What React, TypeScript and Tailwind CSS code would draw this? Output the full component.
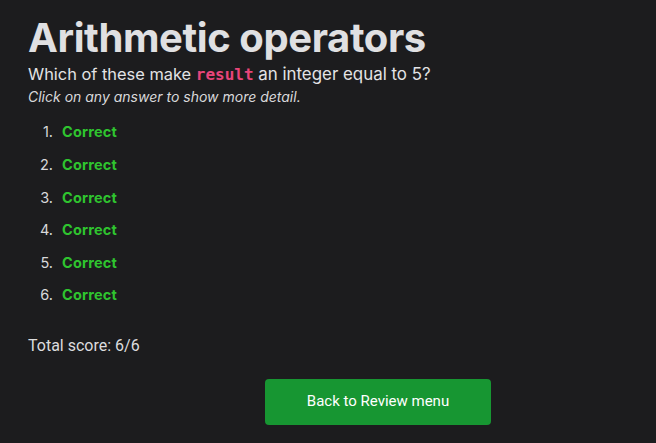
import React from "react";

export default function App() {
  const items = [1, 2, 3, 4, 5, 6];
  return (
    <div className="min-h-[443px] w-full bg-[#1c1c1e] text-[#e3e3e5] font-['Inter',sans-serif] px-[28px] pt-[12px]">
      <h1 className="text-[40px] font-bold leading-[52px] text-[#e0e0e2] tracking-[-0.4px]">Arithmetic operators</h1>
      <p className="text-[16.4px] leading-[24px] mt-[-2px]">
        Which of these make{" "}
        <code className="font-['DejaVu_Sans_Mono',monospace] font-bold text-[16px] text-[#e8457a]">result</code>{" "}
        <span className="text-[16.9px]">an integer equal to 5?</span>
      </p>
      <p className="text-[14px] italic leading-[20px] text-[#d8d8da]">Click on any answer to show more detail.</p>
      <ol className="mt-[9px] flex flex-col">
        {items.map((n) => (
          <li key={n} className="flex h-[32.6px] items-center text-[14.5px]">
            <span className="w-[34px] text-right pr-[9px] text-[#d8d8da]">{n}.</span>
            <span className="font-bold text-[#2fc42f] tracking-[0.2px]">Correct</span>
          </li>
        ))}
      </ol>
      <p className="mt-[22px] font-['Roboto',sans-serif] text-[16px] text-[#dcdcde]">Total score: 6/6</p>
      <div className="mt-[21px] ml-[237px]">
        <button className="w-[226px] h-[46px] rounded-[4px] bg-[#179632] text-white font-['Roboto',sans-serif] text-[15px]">
          Back to Review menu
        </button>
      </div>
    </div>
  );
}
